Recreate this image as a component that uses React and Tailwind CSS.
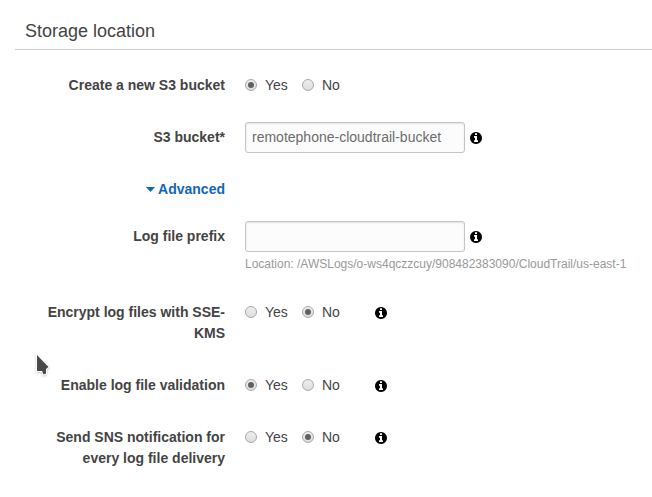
function InfoIcon({ className = '' }) {
  return (
    <svg viewBox="0 128 1536 1536" className={`size-3 shrink-0 fill-black ${className}`}>
      <path d="M1024 1376v-160q0-14-9-23t-23-9h-96v-512q0-14-9-23t-23-9h-320q-14 0-23 9t-9 23v160q0 14 9 23t23 9h96v320h-96q-14 0-23 9t-9 23v160q0 14 9 23t23 9h448q14 0 23-9t9-23zm-128-896v-160q0-14-9-23t-23-9h-192q-14 0-23 9t-9 23v160q0 14 9 23t23 9h192q14 0 23-9t9-23zm640 416q0 209-103 385.5t-279.5 279.5-385.5 103-385.5-103-279.5-279.5-103-385.5 103-385.5 279.5-279.5 385.5-103 385.5 103 279.5 279.5 103 385.5z" />
    </svg>
  );
}

function Radio({ checked, label }) {
  return (
    <span role="radio" aria-checked={checked} className="flex h-[21px] items-start">
      <span className="mt-1 flex size-3 items-center justify-center rounded-full border border-[#a9a9a9] bg-linear-to-b from-[#eeeeee] to-[#dddddd]">
        {checked && <span className="size-1.5 rounded-full bg-[#606060]" />}
      </span>
      <span className="ml-2">{label}</span>
    </span>
  );
}

function Row({ label, className = '', labelClass = '', children }) {
  return (
    <div className={`flex gap-5 ${className}`}>
      <div className={`w-[180px] shrink-0 text-right font-bold ${labelClass}`}>{label}</div>
      <div>{children}</div>
    </div>
  );
}

function YesNo({ value, info }) {
  return (
    <div role="radiogroup" className="flex">
      <div className="w-[57px]"><Radio label="Yes" checked={value === 'Yes'} /></div>
      <div className="w-[73px]"><Radio label="No" checked={value === 'No'} /></div>
      {info && <InfoIcon className="mt-[5px]" />}
    </div>
  );
}

function TextField({ value, label }) {
  return (
    <div className="flex gap-[5px]">
      <input
        aria-label={label}
        defaultValue={value}
        className="h-[31px] w-[220px] rounded-[3px] border border-[#c4c4c4] bg-[#fcfcfc] px-1.5 pb-0.5 text-[14px] text-[#6c6c6c] shadow-[inset_0_1px_2px_#e4e4e4] outline-none"
      />
      <InfoIcon className="mt-[10px]" />
    </div>
  );
}

export default function App() {
  return (
    <div className="relative h-[497px] w-[652px] overflow-hidden bg-white font-['Liberation_Sans',Arial,sans-serif] text-[14px] leading-[21px] text-[#444444]">
      <h2 className="ml-[15px] h-[50px] border-b border-[#cccccc] pt-[18px] pl-2.5 text-[18px] leading-[26px]">
        Storage location
      </h2>
      <div className="pt-[25px] pl-[45px]">
        <Row label="Create a new S3 bucket"><YesNo value="Yes" /></Row>
        <Row label="S3 bucket*" className="mt-[26px]" labelClass="pt-[5px]">
          <TextField label="S3 bucket" value="remotephone-cloudtrail-bucket" />
        </Row>
        <Row
          className="mt-[26px]"
          label={
            <span className="flex items-center justify-end gap-[3px] text-[#1166bb]">
              <svg viewBox="0 0 9 5" className="h-[5px] w-[9px] fill-current"><path d="M0 0h9L4.5 5z" /></svg>
              Advanced
            </span>
          }
        />
        <Row label="Log file prefix" className="mt-[21px]" labelClass="pt-[5px]">
          <TextField label="Log file prefix" value="" />
          <p className="mt-0.5 text-[12px] whitespace-nowrap text-[#999999]">
            Location: /AWSLogs/o-ws4qczzcuy/908482383090/CloudTrail/us-east-1
          </p>
        </Row>
        <Row label="Encrypt log files with SSE-KMS" className="mt-[27px]"><YesNo value="No" info /></Row>
        <Row label="Enable log file validation" className="mt-[31px]"><YesNo value="Yes" info /></Row>
        <Row label="Send SNS notification for every log file delivery" className="mt-[31px]"><YesNo value="No" info /></Row>
      </div>
      <svg viewBox="0 0 18 26" className="absolute top-[352px] left-[34px] h-[26px] w-[18px] drop-shadow-[0_1px_1px_#00000033]">
        <path d="M3 3v16h5l1.5 3.5 2.5-1v-4.5l2.5-2z" fill="#4a4a4a" stroke="white" strokeWidth="2" paintOrder="stroke" />
      </svg>
    </div>
  );
}
